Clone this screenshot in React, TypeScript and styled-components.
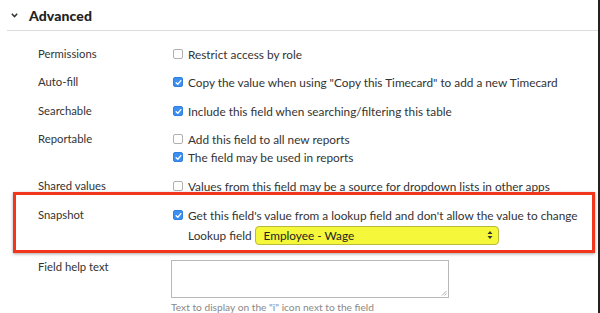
import React from 'react';
import styled, { createGlobalStyle } from 'styled-components';

const GlobalStyle = createGlobalStyle`
  body {
    margin: 0;
    background: #fff;
    font-family: Lato, "Open Sans", sans-serif;
    color: #333;
  }
`;

const Page = styled.div`
  width: 600px;
  height: 313px;
  box-sizing: border-box;
  border-right: 2px solid #222;
  overflow: hidden;
`;

const Header = styled.div`
  display: flex;
  align-items: center;
  gap: 11px;
  height: 31px;
  margin-left: 7px;
  padding-left: 4px;
  border-bottom: 1px solid #ddd;
  box-sizing: border-box;
  h2 {
    margin: 0;
    font-size: 14px;
    font-weight: 900;
    color: #222;
    letter-spacing: 0.1px;
  }
`;

const Body = styled.div`
  display: flex;
  flex-direction: column;
  gap: 10px;
  padding: 14px 3px 0 13px;
`;

const Row = styled.div<{ $highlight?: boolean; $gapTop?: number }>`
  display: grid;
  grid-template-columns: 133px 1fr;
  padding-left: ${(p) => (p.$highlight ? 22 : 25)}px;
  margin-top: ${(p) => p.$gapTop ?? 0}px;
  ${(p) =>
    p.$highlight &&
    `
    border: 3px solid #f2361c;
    margin: -13px 0 -5px 0;
    padding-top: 11px;
    padding-bottom: 4px;
    box-shadow: 0 1px 3px rgba(0, 0, 0, 0.35);
  `}
`;

const Label = styled.div`
  font-size: 11.3px;
  line-height: 18px;
  color: #333;
`;

const Options = styled.div`
  display: flex;
  flex-direction: column;
`;

const Option = styled.label`
  display: flex;
  align-items: center;
  gap: 5px;
  height: 18px;
  padding-left: 2px;
  font-size: 11.8px;
  color: #333;
  white-space: nowrap;
`;

const Box = styled.span<{ $checked?: boolean }>`
  display: inline-flex;
  align-items: center;
  justify-content: center;
  flex: none;
  width: 10px;
  height: 10px;
  box-sizing: border-box;
  border-radius: 2px;
  background: ${(p) => (p.$checked ? '#3d8ff0' : '#fff')};
  border: 1px solid ${(p) => (p.$checked ? '#2f7fe0' : '#b0b0b0')};
`;

const LookupLine = styled.div`
  display: flex;
  align-items: center;
  gap: 3px;
  height: 22px;
  padding-left: 17px;
  font-size: 11.8px;
  color: #333;
`;

const Select = styled.div`
  display: flex;
  align-items: center;
  justify-content: space-between;
  width: 244px;
  height: 19px;
  box-sizing: border-box;
  padding: 0 5px 0 8px;
  background: #f5f83a;
  border: 1px solid #b9b93a;
  border-radius: 4px;
  font-size: 11.8px;
  color: #222;
`;

const TextArea = styled.div`
  width: 278px;
  height: 38px;
  margin-top: 2px;
  box-sizing: border-box;
  border: 1px solid #b8b8b8;
  position: relative;
  svg {
    position: absolute;
    right: 1px;
    bottom: 1px;
  }
`;

const Hint = styled.div`
  margin-top: 3px;
  font-size: 10.2px;
  color: #888;
`;

function Check({ checked }: { checked?: boolean }) {
  return (
    <Box $checked={checked}>
      {checked && (
        <svg width="7" height="7" viewBox="0 0 8 8">
          <path d="M1.3 4.2 L3.2 6 L6.7 1.8" fill="none" stroke="#fff" strokeWidth="1.5" strokeLinecap="round" strokeLinejoin="round" />
        </svg>
      )}
    </Box>
  );
}

const rows: { label: string; gapTop?: number; options: { text: string; checked?: boolean }[] }[] = [
  { label: 'Permissions', options: [{ text: 'Restrict access by role' }] },
  { label: 'Auto-fill', options: [{ text: 'Copy the value when using "Copy this Timecard" to add a new Timecard', checked: true }] },
  { label: 'Searchable', gapTop: 1, options: [{ text: 'Include this field when searching/filtering this table', checked: true }] },
  {
    label: 'Reportable',
    options: [
      { text: 'Add this field to all new reports' },
      { text: 'The field may be used in reports', checked: true },
    ],
  },
  { label: 'Shared values', gapTop: 1, options: [{ text: 'Values from this field may be a source for dropdown lists in other apps' }] },
];

export default function App() {
  return (
    <Page>
      <GlobalStyle />
      <Header>
        <svg width="7" height="5" viewBox="0 0 7 5">
          <path d="M0.8 0.8 L3.5 3.6 L6.2 0.8" fill="none" stroke="#333" strokeWidth="1.5" />
        </svg>
        <h2>Advanced</h2>
      </Header>
      <Body>
        {rows.map((r) => (
          <Row key={r.label} $gapTop={r.gapTop}>
            <Label>{r.label}</Label>
            <Options>
              {r.options.map((o) => (
                <Option key={o.text}>
                  <Check checked={o.checked} />
                  {o.text}
                </Option>
              ))}
            </Options>
          </Row>
        ))}
        <Row $highlight>
          <Label>Snapshot</Label>
          <Options>
            <Option>
              <Check checked />
              Get this field's value from a lookup field and don't allow the value to change
            </Option>
            <LookupLine>
              Lookup field
              <Select>
                <span>Employee - Wage</span>
                <svg width="6" height="10" viewBox="0 0 6 10">
                  <path d="M3 1 L5.5 4 L0.5 4 Z M3 9 L5.5 6 L0.5 6 Z" fill="#333" />
                </svg>
              </Select>
            </LookupLine>
          </Options>
        </Row>
        <Row>
          <Label>Field help text</Label>
          <div>
            <TextArea>
              <svg width="6" height="6" viewBox="0 0 6 6">
                <path d="M5.5 1 L1 5.5 M5.5 3.5 L3.5 5.5" stroke="#999" strokeWidth="0.8" />
              </svg>
            </TextArea>
            <Hint>Text to display on the "i" icon next to the field</Hint>
          </div>
        </Row>
      </Body>
    </Page>
  );
}
